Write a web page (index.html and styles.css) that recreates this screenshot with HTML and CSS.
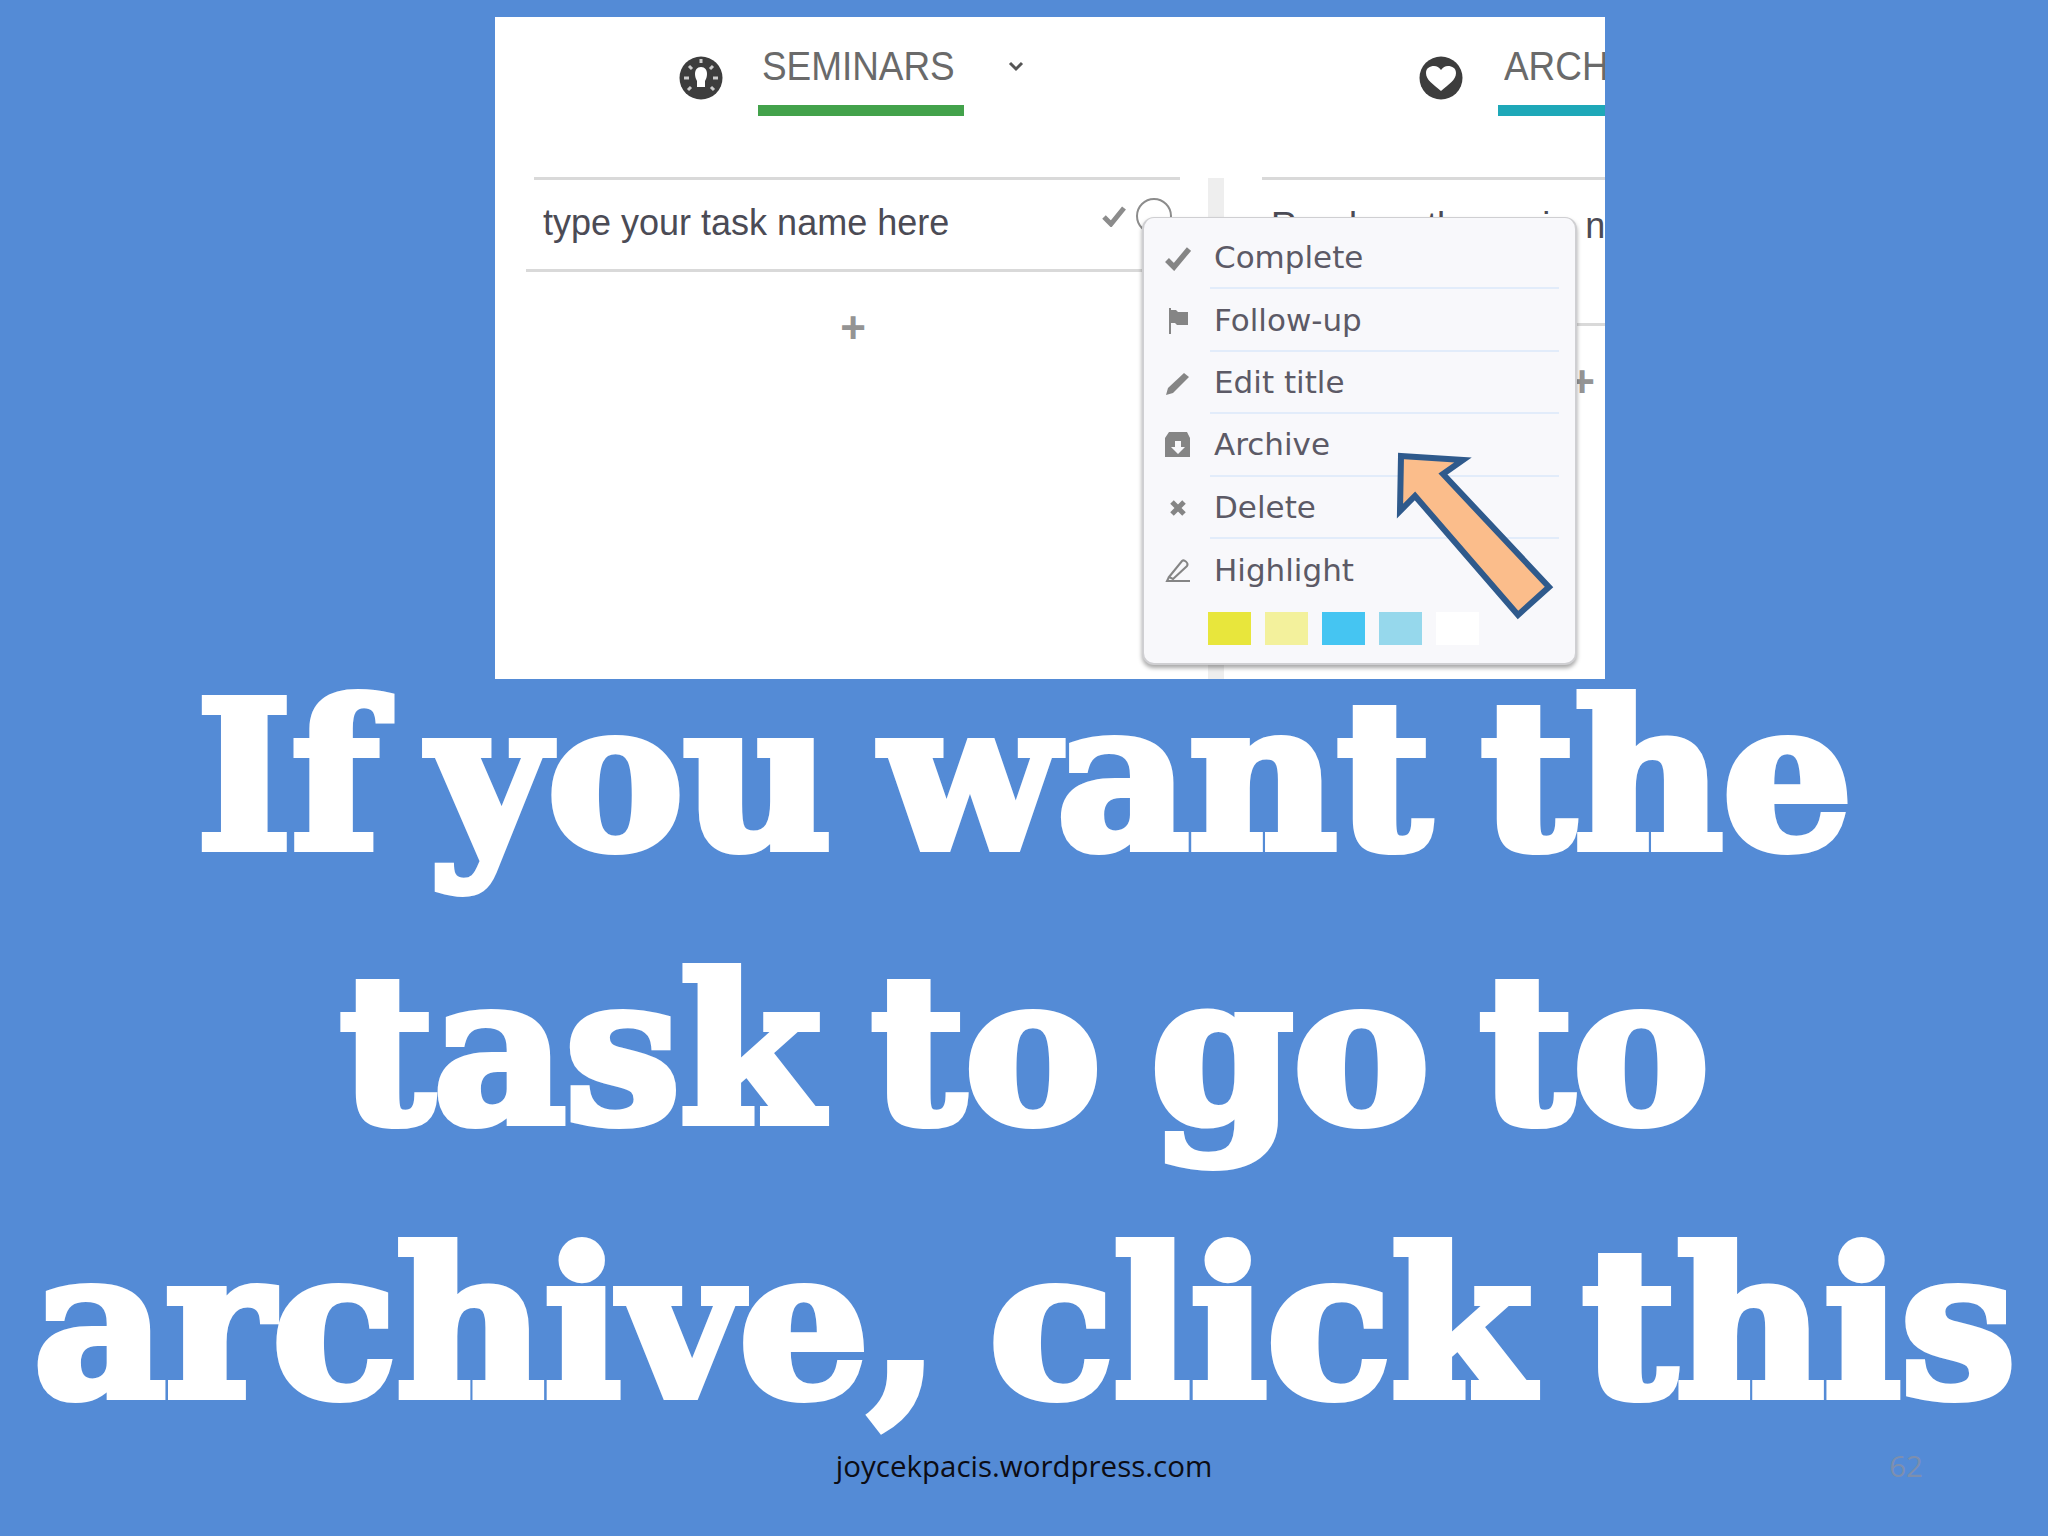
FILE: index.html
```html
<!DOCTYPE html>
<html lang="en">
<head>
    <meta charset="UTF-8">
    <title>If you want the task to go to archive, click this</title>
    <link rel="stylesheet" href="styles.css">
</head>
<body>
    <div class="slide">
        <div class="shot">
            <div class="tabs">
                <div class="tab tab-seminars">
                    <svg class="tab-icon" viewBox="0 0 44 44">
                        <circle cx="22" cy="22" r="21.5" fill="#3d3d3d"/>
                        <path d="M22 11c-4 0-6 3-6 7 0 3 1 5 2 7v6h8v-6c1-2 2-4 2-7 0-4-2-7-6-7z" fill="#fff"/>
                        <g stroke="#ccc" stroke-width="3">
                            <path d="M22 3v4M10 22H5M39 22h-5M10 10l3 3M34 10l-3 3M9 34l3-3M35 34l-3-3"/>
                        </g>
                    </svg>
                    <div class="tab-label seminars"><span class="narrow">SEMINARS</span></div>
                    <svg class="chevron" viewBox="0 0 16 12">
                        <path d="M2 3l6 6 6-6" fill="none" stroke="#555" stroke-width="3"/>
                    </svg>
                </div>
                <div class="tab tab-archive">
                    <svg class="tab-icon" viewBox="0 0 44 44">
                        <circle cx="22" cy="22" r="21.5" fill="#3d3d3d"/>
                        <path d="M22 35C14 28 7 24 7 17c0-5 4-7 8-7 3 0 5 1.500 7 4 2-2.500 4-4 7-4 4 0 8 2 8 7 0 7-7 11-15 18z" fill="#fff"/>
                    </svg>
                    <div class="tab-label archive"><span class="narrow">ARCHIVE</span></div>
                </div>
            </div>

            <div class="board">
                <div class="col col-first">
                    <div class="task">
                        <span class="task-name">type your task name here</span>
                        <svg class="task-check" viewBox="0 0 24 22">
                            <path d="M2 12l7 7L22 3" fill="none" stroke="#8c8c8c" stroke-width="5"/>
                        </svg>
                        <span class="task-circle"></span>
                    </div>
                    <div class="add">+</div>
                </div>
                <div class="scroll"></div>
                <div class="col col-second">
                    <div class="task tall">
                        <span class="task-name">Read on the main notes</span>
                    </div>
                    <div class="add">+</div>
                </div>
            </div>

            <div class="menu">
                <div class="menu-row">
                    <svg class="menu-icon" viewBox="0 0 26 26"><path d="M2 15l7 7L24 4" fill="none" stroke="#858585" stroke-width="5.500"/></svg>
                    <span class="menu-text">Complete</span>
                </div>
                <div class="menu-row">
                    <svg class="menu-icon" viewBox="0 0 26 26"><path d="M4 0h2v27H4zM6 2h5l2 2h10v13H12l-2-2H6z" fill="#858585"/></svg>
                    <span class="menu-text">Follow-up</span>
                </div>
                <div class="menu-row">
                    <svg class="menu-icon" viewBox="0 0 26 26"><path d="M1 25l2-7L19 3l5 4L8 23z" fill="#858585"/></svg>
                    <span class="menu-text">Edit title</span>
                </div>
                <div class="menu-row">
                    <svg class="menu-icon" viewBox="0 0 26 26"><path d="M4 0h18l3 6v19H0V6zM10 9v6H6l7 7 7-7h-4V9z" fill="#858585" fill-rule="evenodd"/></svg>
                    <span class="menu-text">Archive</span>
                </div>
                <div class="menu-row">
                    <svg class="menu-icon" viewBox="0 0 26 26"><path d="M7 7l12 12M19 7L7 19" fill="none" stroke="#858585" stroke-width="5"/></svg>
                    <span class="menu-text">Delete</span>
                </div>
                <div class="menu-row last">
                    <svg class="menu-icon" viewBox="0 0 26 26"><path d="M4 20L17 4c2-2 7 2 5 5L8 22zM4 20l-2 4h23" fill="none" stroke="#858585" stroke-width="2"/></svg>
                    <span class="menu-text">Highlight</span>
                </div>
                <div class="swatches">
                    <span class="swatch yellow"></span>
                    <span class="swatch pale"></span>
                    <span class="swatch blue"></span>
                    <span class="swatch sky"></span>
                    <span class="swatch white"></span>
                </div>
            </div>

            <svg class="pointer" viewBox="0 0 170 175">
                <polygon points="11,9 73,13 53,27 159,140 128,168 25,49 10,64" fill="#fbbd8b" stroke="#2f5a8c" stroke-width="6"/>
            </svg>
        </div>

        <h1 class="headline">If you want the<br>task to go to<br>archive, click this</h1>

        <div class="footer">
            <span></span>
            <span class="site">joycekpacis.wordpress.com</span>
            <span class="page-no">62</span>
        </div>
    </div>
</body>
</html>
```

FILE: styles.css
```css
* {
    box-sizing: border-box;
}

body {
    margin: 0;
    background-color: #548bd6;
}

.slide {
    width: 2048px;
    height: 1536px;
    display: flex;
    flex-direction: column;
    align-items: center;
    overflow: hidden;
}

/* pasted screenshot */
.shot {
    position: relative;
    align-self: flex-start;
    width: 1110px;
    height: 662px;
    margin: 17px 0 0 495px;
    flex-shrink: 0;
    background-color: white;
    overflow: hidden;
}

.tabs {
    display: flex;
    height: 99px;
}

.tab {
    display: flex;
    flex-shrink: 0;
    height: 100%;
}

.tab-seminars {
    margin-left: 184px;
    width: 740px;
}

.tab-icon {
    width: 44px;
    height: 44px;
    margin-top: 39px;
}

.tab-label {
    font-family: "Liberation Sans", sans-serif;
    font-size: 41px;
    line-height: 38px;
    color: #6a6a6a;
    padding: 30px 0 0 4px;
    height: 99px;
}

.narrow {
    display: inline-block;
    transform: scaleX(0.9);
    transform-origin: left;
}

.seminars {
    width: 206px;
    margin-left: 35px;
    border-bottom: 11px solid #43a24b;
}

.archive {
    width: 240px;
    margin-left: 35px;
    border-bottom: 11px solid #1ea8b8;
    padding-left: 6px;
}

.chevron {
    width: 16px;
    height: 12px;
    margin: 43px 0 0 44px;
}

.board {
    display: flex;
    margin-top: 61px;
    margin-left: 31px;
}

.col {
    flex-shrink: 0;
}

.col-first {
    width: 654px;
}

.col-second {
    width: 640px;
}

.scroll {
    width: 16px;
    height: 520px;
    margin: 1px 38px 0 28px;
    flex-shrink: 0;
    background-color: #eeeeee;
}

.task {
    display: flex;
    align-items: center;
    height: 95px;
    margin-left: 8px;
    padding: 0 8px 6px 9px;
    border-top: 3px solid #d9d9d9;
    position: relative;
}

.task::after {
    content: "";
    position: absolute;
    left: -8px;
    right: 0;
    bottom: 0;
    border-bottom: 3px solid #d9d9d9;
}

.col-second .task {
    margin-left: 0;
    height: 149px;
    align-items: flex-start;
    padding-top: 25px;
}

.col-second .task::after {
    left: 0;
}

.col-second .task-name {
    word-spacing: 5px;
}

.task-name {
    flex: 1;
    font-family: "Liberation Sans", sans-serif;
    font-size: 36px;
    color: #4b4b55;
}

.task-check {
    width: 24px;
    height: 22px;
    margin: 0 10px 14px 0;
}

.task-circle {
    width: 36px;
    height: 36px;
    margin-bottom: 14px;
    border: 2px solid #8c8c8c;
    border-radius: 50%;
}

.add {
    font-family: "Liberation Sans", sans-serif;
    font-weight: bold;
    font-size: 44px;
    line-height: 50px;
    margin-top: 31px;
    text-align: center;
    color: #949494;
}

/* popup over the task */
.menu {
    position: absolute;
    left: 647px;
    top: 200px;
    width: 435px;
    height: 448px;
    padding: 9px 16px 0 0;
    background-color: #f8f8fb;
    border: 2px solid #cfcfd2;
    border-top-width: 1px;
    border-radius: 12px;
    box-shadow: 0 3px 4px rgba(0, 0, 0, 0.35);
}

.menu-row {
    display: flex;
    align-items: center;
    height: 62.4px;
}

.menu-icon {
    width: 26px;
    height: 26px;
    margin: 0 19px 0 21px;
    flex-shrink: 0;
}

.menu-text {
    flex: 1;
    height: 100%;
    display: flex;
    align-items: center;
    padding-left: 4px;
    font-family: "DejaVu Sans", sans-serif;
    font-size: 31px;
    color: #5c5a66;
    border-bottom: 2px solid #e2ecfa;
}

.last .menu-text {
    border-bottom: none;
}

.swatches {
    display: flex;
    gap: 14px;
    margin: 11px 0 0 64px;
}

.swatch {
    width: 43px;
    height: 33px;
}

.yellow { background-color: #e8e63c; }
.pale { background-color: #f3f19c; }
.blue { background-color: #45c5f2; }
.sky { background-color: #96d8ec; }
.white { background-color: white; }

.pointer {
    position: absolute;
    left: 895px;
    top: 430px;
    width: 170px;
    height: 175px;
}

.headline {
    margin: 0;
    font-family: "DejaVu Serif", serif;
    font-weight: bold;
    font-size: 205px;
    line-height: 274px;
    letter-spacing: -1px;
    word-spacing: -20px;
    text-align: center;
    white-space: nowrap;
    color: white;
    -webkit-text-stroke: 8px white;
    flex-shrink: 0;
    margin-top: -40px;
}

.footer {
    display: grid;
    grid-template-columns: 1fr auto 1fr;
    width: 100%;
    margin-top: -16px;
    align-items: center;
    flex-shrink: 0;
}

.site {
    font-family: "Open Sans", sans-serif;
    font-size: 29.500px;
    color: #0c0c14;
}

.page-no {
    justify-self: end;
    padding-right: 125px;
    font-family: "Open Sans", sans-serif;
    font-size: 29.500px;
    color: #7d8fae;
}
```
